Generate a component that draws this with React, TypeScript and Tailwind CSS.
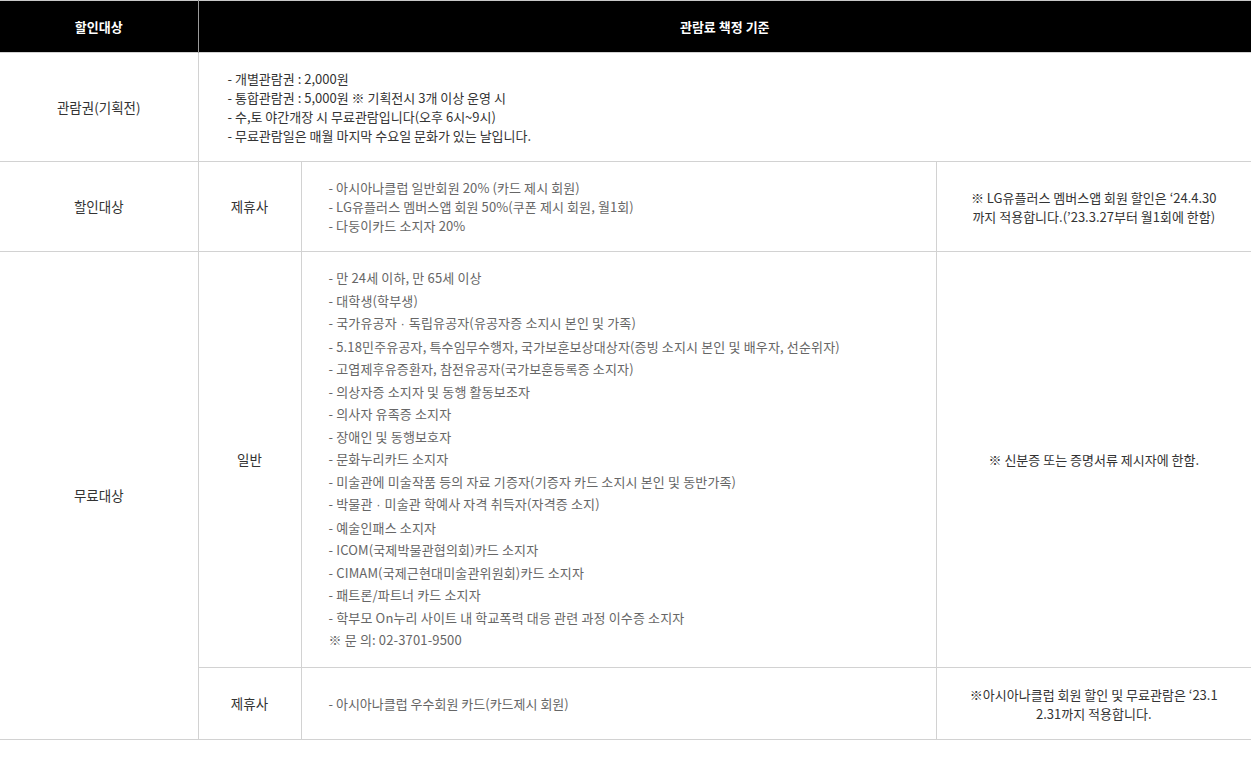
import React from "react";

const FONT = "font-['Noto_Sans_CJK_KR','Noto_Sans',sans-serif]";

const Dot = () => <span className="font-['Liberation_Sans',sans-serif]"> · </span>;

const freeList: React.ReactNode[] = [
  "- 만 24세 이하, 만 65세 이상",
  "- 대학생(학부생)",
  <>
    - 국가유공자
    <Dot />
    독립유공자(유공자증 소지시 본인 및 가족)
  </>,
  "- 5.18민주유공자, 특수임무수행자, 국가보훈보상대상자(증빙 소지시 본인 및 배우자, 선순위자)",
  "- 고엽제후유증환자, 참전유공자(국가보훈등록증 소지자)",
  "- 의상자증 소지자 및 동행 활동보조자",
  "- 의사자 유족증 소지자",
  "- 장애인 및 동행보호자",
  "- 문화누리카드 소지자",
  "- 미술관에 미술작품 등의 자료 기증자(기증자 카드 소지시 본인 및 동반가족)",
  <>
    - 박물관
    <Dot />
    미술관 학예사 자격 취득자(자격증 소지)
  </>,
  "- 예술인패스 소지자",
  "- ICOM(국제박물관협의회)카드 소지자",
  "- CIMAM(국제근현대미술관위원회)카드 소지자",
  "- 패트론/파트너 카드 소지자",
  "- 학부모 On누리 사이트 내 학교폭력 대응 관련 과정 이수증 소지자",
  "※ 문 의: 02-3701-9500",
];

const cell = "border border-[#d2d2d2] align-middle";
const label = "text-[13.5px] text-center";

export default function App() {
  return (
    <div className={`bg-white w-[1256px] h-[759px] ${FONT} text-[13px]`}>
      <table className="w-[1251px] border-collapse table-fixed border-t border-t-[#c8c8c8]">
        <colgroup>
          <col className="w-[198px]" />
          <col className="w-[103px]" />
          <col className="w-[635px]" />
          <col className="w-[315px]" />
        </colgroup>
        <thead>
          <tr className="h-[52px] bg-black text-white font-bold">
            <th className="border-r border-r-[#9a9a9a] text-center">할인대상</th>
            <th colSpan={3} className="text-center">
              관람료 책정 기준
            </th>
          </tr>
        </thead>
        <tbody className="text-[#333]">
          <tr className="h-[109px]">
            <td className={`${cell} ${label} border-l-0`}>관람권(기획전)</td>
            <td colSpan={3} className={`${cell} border-r-0 pl-[29px] leading-[19px]`}>
              <p>- 개별관람권 : 2,000원</p>
              <p>- 통합관람권 : 5,000원 ※ 기획전시 3개 이상 운영 시</p>
              <p>- 수,토 야간개장 시 무료관람입니다(오후 6시~9시)</p>
              <p>- 무료관람일은 매월 마지막 수요일 문화가 있는 날입니다.</p>
            </td>
          </tr>
          <tr className="h-[90px]">
            <td className={`${cell} ${label} border-l-0`}>할인대상</td>
            <td className={`${cell} ${label}`}>제휴사</td>
            <td className={`${cell} pl-[27px] leading-[19px] text-[#666] tracking-[0.1px]`}>
              <p>- 아시아나클럽 일반회원 20% (카드 제시 회원)</p>
              <p>- LG유플러스 멤버스앱 회원 50%(쿠폰 제시 회원, 월1회)</p>
              <p>- 다둥이카드 소지자 20%</p>
            </td>
            <td className={`${cell} border-r-0 text-center leading-[19px]`}>
              ※ LG유플러스 멤버스앱 회원 할인은 ‘24.4.30
              <br />
              까지 적용합니다.(’23.3.27부터 월1회에 한함)
            </td>
          </tr>
          <tr className="h-[416px]">
            <td rowSpan={2} className={`${cell} ${label} border-l-0`}>
              무료대상
            </td>
            <td className={`${cell} ${label}`}>일반</td>
            <td className={`${cell} pl-[27px] leading-[22.5px] text-[#666] tracking-[0.15px]`}>
              {freeList.map((line, i) => (
                <p key={i}>{line}</p>
              ))}
            </td>
            <td className={`${cell} border-r-0 text-center`}>※ 신분증 또는 증명서류 제시자에 한함.</td>
          </tr>
          <tr className="h-[72px]">
            <td className={`${cell} ${label}`}>제휴사</td>
            <td className={`${cell} pl-[27px] text-[#666]`}>- 아시아나클럽 우수회원 카드(카드제시 회원)</td>
            <td className={`${cell} border-r-0 text-center leading-[19px]`}>
              ※아시아나클럽 회원 할인 및 무료관람은 ‘23.1
              <br />
              2.31까지 적용합니다.
            </td>
          </tr>
        </tbody>
      </table>
    </div>
  );
}
